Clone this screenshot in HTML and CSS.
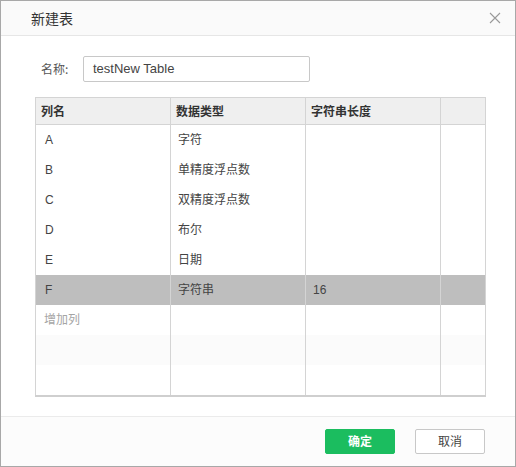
FILE: index.html
```html
<!DOCTYPE html>
<html>
<head>
<meta charset="utf-8">
<link rel="stylesheet" href="styles.css">
</head>
<body>
<div class="dialog">
  <div class="header">
    <span class="title">新建表</span>
    <svg class="close" width="12" height="12" viewBox="0 0 12 12"><path d="M1 1L11 11M11 1L1 11" stroke="#999" stroke-width="1.1" fill="none"/></svg>
  </div>
  <div class="content">
    <div class="name-row">
      <label class="label">名称:</label>
      <div class="input">testNew Table</div>
    </div>
    <table class="grid">
      <colgroup><col class="c1"><col class="c2"><col class="c3"><col class="c4"></colgroup>
      <thead>
        <tr><th>列名</th><th>数据类型</th><th>字符串长度</th><th></th></tr>
      </thead>
      <tbody>
        <tr><td class="latin">A</td><td>字符</td><td></td><td></td></tr>
        <tr><td class="latin">B</td><td>单精度浮点数</td><td></td><td></td></tr>
        <tr><td class="latin">C</td><td>双精度浮点数</td><td></td><td></td></tr>
        <tr><td class="latin">D</td><td>布尔</td><td></td><td></td></tr>
        <tr><td class="latin">E</td><td>日期</td><td></td><td></td></tr>
        <tr class="selected"><td class="latin">F</td><td>字符串</td><td class="latin">16</td><td></td></tr>
        <tr><td class="add">增加列</td><td></td><td></td><td></td></tr>
        <tr class="stripe"><td></td><td></td><td></td><td></td></tr>
        <tr><td></td><td></td><td></td><td></td></tr>
      </tbody>
    </table>
  </div>
  <div class="footer">
    <button class="btn primary">确定</button>
    <button class="btn">取消</button>
  </div>
</div>
</body>
</html>
```

FILE: styles.css
```css
html, body {
  margin: 0;
  padding: 0;
  background: #fff;
}
body {
  font-family: "Liberation Sans", "Noto Sans CJK SC", sans-serif;
  font-size: 12px;
  color: #333;
}
.dialog {
  width: 516px;
  height: 467px;
  box-sizing: border-box;
  border: 1px solid #a8a8a8;
  display: flex;
  flex-direction: column;
  background: #fff;
  overflow: hidden;
}
.header {
  flex-shrink: 0;
  height: 35px;
  box-sizing: border-box;
  border-bottom: 1px solid #e6e6e6;
  background: #fafafa;
  display: flex;
  align-items: center;
  justify-content: space-between;
  padding: 0 14px 1px 30px;
}
.title {
  font-size: 14px;
  color: #333;
  font-family: "Noto Sans CJK SC", sans-serif;
}
.close {
  display: block;
  margin-top: 1px;
}
.content {
  flex: 1;
  min-height: 0;
  padding: 20px 29px 0 34px;
}
.name-row {
  display: flex;
  align-items: center;
  height: 26px;
}
.label {
  width: 48px;
  padding-left: 6px;
  padding-bottom: 2px;
  box-sizing: border-box;
  color: #555;
  font-family: "Noto Sans CJK SC", sans-serif;
  font-size: 12px;
}
.input {
  width: 227px;
  height: 26px;
  box-sizing: border-box;
  border: 1px solid #c8c8c8;
  border-radius: 2px;
  padding: 0 9px;
  line-height: 24px;
  font-size: 13px;
  color: #444;
}
.grid {
  margin-top: 15px;
  border-collapse: collapse;
  width: 450px;
  table-layout: fixed;
  border: 1px solid #cfcfcf;
  border-bottom-width: 2px;
}
.c1, .c2, .c3 { width: 135px; }
.c4 { width: 45px; }
.grid th {
  height: 24px;
  background: #efefef;
  border: 1px solid #d4d4d4;
  text-align: left;
  font-weight: bold;
  font-family: "Noto Sans CJK SC", sans-serif;
  font-size: 12px;
  color: #333;
  padding: 0 5px 2px;
}
.grid td {
  height: 27px;
  padding: 0 7px 3px;
  border-left: 1px solid #d4d4d4;
  border-right: 1px solid #d4d4d4;
  font-family: "Noto Sans CJK SC", sans-serif;
  font-size: 12px;
  color: #444;
}
.grid td:first-child {
  padding-left: 9px;
}
.grid td.latin {
  font-family: "Liberation Sans", sans-serif;
  font-size: 12px;
  height: 29px;
  padding-bottom: 1px;
}
.grid tr.selected td {
  background: #bebebe;
}
.grid tr.stripe td {
  background: #fbfbfb;
}
.grid td.add {
  color: #a5a5a5;
  padding-left: 8px;
}
.footer {
  flex-shrink: 0;
  height: 50px;
  box-sizing: border-box;
  border-top: 1px solid #ebebeb;
  background: #fcfcfc;
  display: flex;
  justify-content: flex-end;
  align-items: center;
  gap: 20px;
  padding: 0 30px 0 0;
}
.btn {
  width: 70px;
  height: 25px;
  box-sizing: border-box;
  border: 1px solid #c8c8c8;
  border-radius: 2px;
  background: #fff;
  color: #444;
  font-family: "Noto Sans CJK SC", sans-serif;
  font-size: 12px;
  padding: 0 0 2px;
}
.btn.primary {
  background: #1bbd5f;
  border-color: #1bbd5f;
  color: #fff;
  font-weight: bold;
}
```
